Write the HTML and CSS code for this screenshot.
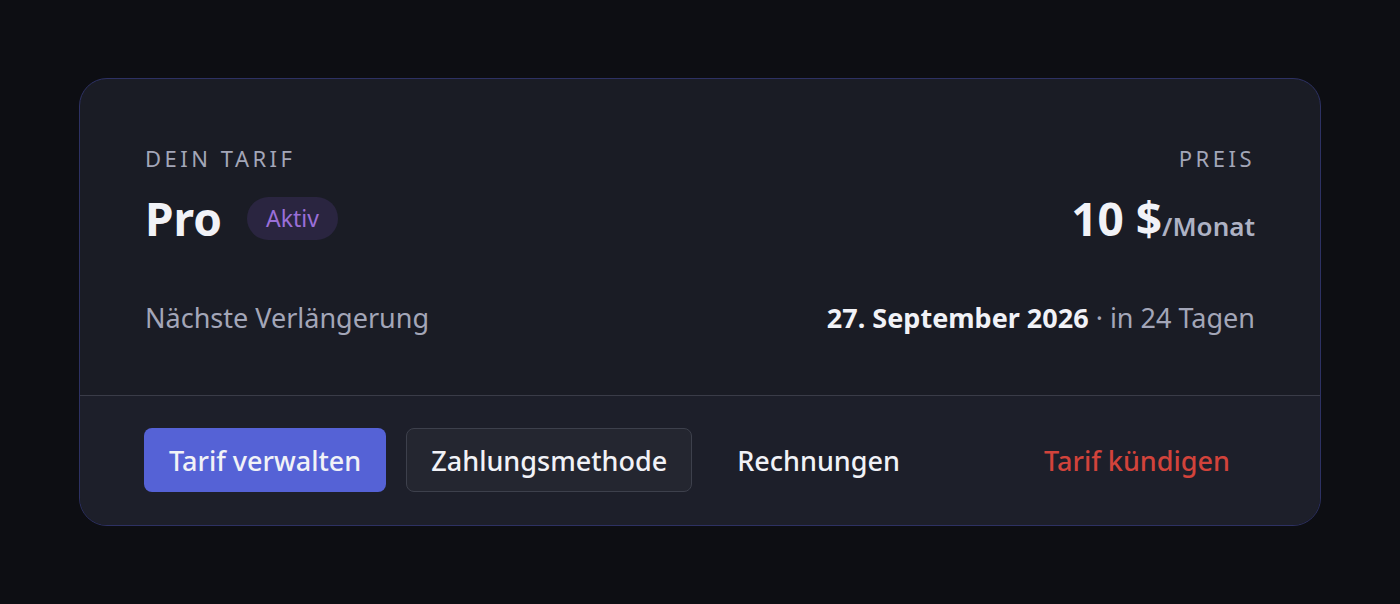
FILE: index.html
```html
<!DOCTYPE html>
<html lang="de">

<head>
    <meta charset="UTF-8">
    <meta name="viewport" content="width=device-width, initial-scale=1.0">
    <title>Abo | Tarif</title>
    <link rel="stylesheet" href="styles.css">
</head>

<body>
    <div class="plan-card">
        <div class="plan-body">
            <div class="plan-head">
                <div class="plan-info">
                    <span class="label">Dein Tarif</span>
                    <div class="plan-name">
                        <span class="name">Pro</span>
                        <span class="badge">Aktiv</span>
                    </div>
                </div>
                <div class="plan-price">
                    <span class="label">Preis</span>
                    <div class="price"><b>10 $</b><span class="per">/Monat</span></div>
                </div>
            </div>
            <div class="renewal">
                <span class="renewal-label">Nächste Verlängerung</span>
                <span class="renewal-date"><b>27. September 2026</b> · in 24 Tagen</span>
            </div>
        </div>
        <div class="plan-actions">
            <button class="btn btn-primary">Tarif verwalten</button>
            <button class="btn btn-outline">Zahlungsmethode</button>
            <button class="btn btn-ghost">Rechnungen</button>
            <button class="btn btn-danger">Tarif kündigen</button>
        </div>
    </div>
</body>

</html>
```

FILE: styles.css
```css
html,
body {
    margin: 0;
}

body {
    background-color: #0d0e13;
    font-family: "Noto Sans", sans-serif;
    color: #f1f2f7;
    padding: 78px 79px;
}

.plan-card {
    border: 1px solid #2d3163;
    border-radius: 28px;
    background-color: #1a1c25;
    overflow: hidden;
}

.plan-body {
    padding: 64px 65px 60px;
}

.plan-head {
    display: flex;
    justify-content: space-between;
}

.label {
    display: block;
    font-size: 22px;
    letter-spacing: 3.5px;
    text-transform: uppercase;
    color: #a3a6b8;
    line-height: 30px;
}

.plan-name {
    display: flex;
    align-items: center;
    gap: 25px;
    margin-top: 20px;
}

.name {
    font-size: 46px;
    font-weight: 700;
    line-height: 50px;
}

.badge {
    background-color: #2a2540;
    color: #9a6fd8;
    font-size: 23px;
    padding: 6px 19px;
    border-radius: 22px;
    line-height: 31px;
}

.plan-price {
    text-align: right;
}

.price {
    margin-top: 20px;
    line-height: 50px;
}

.price b {
    font-size: 46px;
}

.per {
    font-size: 26px;
    font-weight: 600;
    color: #aeb2c4;
}

.renewal {
    display: flex;
    justify-content: space-between;
    margin-top: 46px;
    font-size: 27px;
    line-height: 34px;
    color: #a3a6b8;
}

.renewal-date b {
    color: #f1f2f7;
}

.plan-actions {
    display: flex;
    gap: 20px;
    border-top: 1px solid #3a3c48;
    background-color: #1d1f2a;
    padding: 32px 65px 33px 64px;
}

.btn {
    font-family: inherit;
    font-size: 27px;
    font-weight: 500;
    height: 64px;
    padding: 0 24px;
    border-radius: 8px;
    border: 1px solid transparent;
    background: none;
    color: #f1f2f7;
}

.btn-primary {
    background-color: #5562d6;
}

.btn-outline {
    background-color: #242630;
    border-color: #3d404c;
}

.btn-danger {
    margin-left: auto;
    color: #d2433b;
}
```
